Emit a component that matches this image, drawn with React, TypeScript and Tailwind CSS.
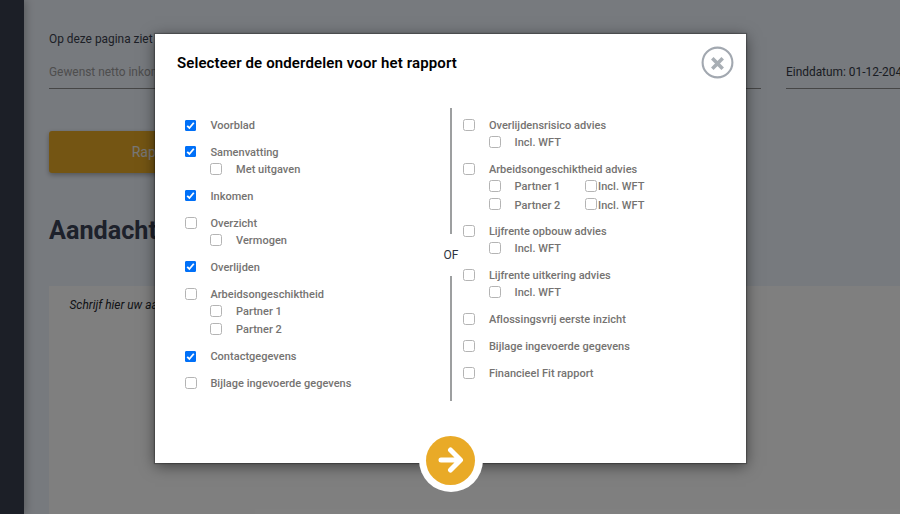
import { useState } from 'react'
import clsx from 'clsx'

type Option = {
  id: string
  label: string
  children?: { id: string; label: string; extra?: { id: string; label: string } }[]
}

const rapportOnderdelen: Option[] = [
  { id: 'voorblad', label: 'Voorblad' },
  { id: 'samenvatting', label: 'Samenvatting', children: [{ id: 'uitgaven', label: 'Met uitgaven' }] },
  { id: 'inkomen', label: 'Inkomen' },
  { id: 'overzicht', label: 'Overzicht', children: [{ id: 'vermogen', label: 'Vermogen' }] },
  { id: 'overlijden', label: 'Overlijden' },
  {
    id: 'ao',
    label: 'Arbeidsongeschiktheid',
    children: [{ id: 'ao-p1', label: 'Partner 1' }, { id: 'ao-p2', label: 'Partner 2' }]
  },
  { id: 'contact', label: 'Contactgegevens' },
  { id: 'bijlage', label: 'Bijlage ingevoerde gegevens' }
]

const adviesOnderdelen: Option[] = [
  { id: 'orv', label: 'Overlijdensrisico advies', children: [{ id: 'orv-wft', label: 'Incl. WFT' }] },
  {
    id: 'aov',
    label: 'Arbeidsongeschiktheid advies',
    children: [
      { id: 'aov-p1', label: 'Partner 1', extra: { id: 'aov-p1-wft', label: 'Incl. WFT' } },
      { id: 'aov-p2', label: 'Partner 2', extra: { id: 'aov-p2-wft', label: 'Incl. WFT' } }
    ]
  },
  { id: 'opbouw', label: 'Lijfrente opbouw advies', children: [{ id: 'opbouw-wft', label: 'Incl. WFT' }] },
  { id: 'uitkering', label: 'Lijfrente uitkering advies', children: [{ id: 'uitkering-wft', label: 'Incl. WFT' }] },
  { id: 'aflossingsvrij', label: 'Aflossingsvrij eerste inzicht' },
  { id: 'advies-bijlage', label: 'Bijlage ingevoerde gegevens' },
  { id: 'fit', label: 'Financieel Fit rapport' }
]

type ListProps = { options: Option[]; checked: string[]; onToggle: (id: string) => void }

function Checkbox({ checked, onClick }: { checked: boolean; onClick: () => void }) {
  return (
    <button
      role="checkbox"
      aria-checked={checked}
      onClick={onClick}
      className={clsx(
        'flex shrink-0 items-center justify-center border',
        checked
          ? 'mr-px h-[11px] w-[11px] rounded-[1px] border-[#0070f8] bg-[#0070f8]'
          : 'h-[12px] w-[12px] rounded-[2.5px] border-[#b4b4b4] bg-white'
      )}
    >
      {checked && (
        <svg viewBox="0 0 11 11" className="h-[11px] w-[11px] shrink-0" fill="none" stroke="#fff" strokeWidth="1.8">
          <path d="M2.2 5.8 4.4 8 8.8 2.7" />
        </svg>
      )}
    </button>
  )
}

function OptionList({ options, checked, onToggle }: ListProps) {
  return (
    <ul className="flex flex-col gap-[9.93px] text-[11px] font-medium tracking-[0.02px] text-[#757371]">
      {options.map(o => (
        <li key={o.id}>
          <div className="flex h-[17px] items-center gap-[13.5px]">
            <Checkbox checked={checked.includes(o.id)} onClick={() => onToggle(o.id)} />
            <span className="pt-[2.2px] leading-[14px] whitespace-nowrap">{o.label}</span>
          </div>
          {o.children && (
            <div className="flex flex-col gap-[1.5px] pl-[25.5px]">
              {o.children.map(c => (
                <div key={c.id} className="flex h-[17px] items-center">
                  <Checkbox checked={checked.includes(c.id)} onClick={() => onToggle(c.id)} />
                  <span className="ml-[13.7px] w-[70px] pt-[2.2px] leading-[14px] whitespace-nowrap">{c.label}</span>
                  {c.extra && (
                    <>
                      <Checkbox checked={checked.includes(c.extra.id)} onClick={() => onToggle(c.extra!.id)} />
                      <span className="ml-[1.5px] pt-[2.2px] leading-[14px] whitespace-nowrap">{c.extra.label}</span>
                    </>
                  )}
                </div>
              ))}
            </div>
          )}
        </li>
      ))}
    </ul>
  )
}

function ReportPage() {
  return (
    <div className="flex h-full bg-[#eff4fc]">
      <aside className="relative w-[23.5px] shrink-0 bg-[#383f4f] shadow-[2px_0_8px_rgba(0,0,0,0.25)]" />
      <main className="min-w-0 flex-1 overflow-hidden pl-[25.5px]">
        <p className="mt-[31px] h-4 text-[11.9px] leading-4 whitespace-nowrap text-[#3a414e]">Op deze pagina ziet u</p>
        <div className="mt-[8px] flex gap-[25px] text-[11.9px] whitespace-nowrap">
          <div className="flex h-[34px] w-[712px] shrink-0 items-center border-b border-[#8c8c8c] pt-[2px] text-[#9c9c9c]">
            Gewenst netto inkomen
          </div>
          <div className="flex h-[34px] w-[240px] shrink-0 items-center border-b border-[#8c8c8c] pt-[2px] text-[#343a46]">
            Einddatum: 01-12-2044
          </div>
        </div>
        <button className="mt-[42px] flex h-[42px] w-[238px] items-center justify-center rounded-[3px] bg-[#e9aa27] text-[14px] text-[#eeeeee] shadow-[0_2px_5px_rgba(0,0,0,0.3)]">
          Rapportage
        </button>
        <h1 className="mt-[42px] h-8 text-[25.2px] leading-8 font-bold text-[#3b4256]">Aandachtspunten</h1>
        <div className="mt-[39px] h-[240px] bg-white px-[20.5px] pt-[10px] text-[11.9px] leading-[18px] text-[#24272e] italic">
          Schrijf hier uw aandachtspunten
        </div>
      </main>
    </div>
  )
}

export default function App() {
  const [checked, setChecked] = useState(['voorblad', 'samenvatting', 'inkomen', 'overlijden', 'contact'])
  const toggle = (id: string) =>
    setChecked(prev => (prev.includes(id) ? prev.filter(x => x !== id) : [...prev, id]))

  return (
    <div className="relative h-[514px] w-[900px] overflow-hidden font-[Roboto,sans-serif]">
      <ReportPage />
      <div className="absolute inset-0 bg-black/50 pt-[34px] pl-[155.4px]">
        <div
          role="dialog"
          className="relative h-[429px] w-[591px] bg-white shadow-[0_0_1px_1px_rgba(0,0,0,0.25),0_3px_14px_rgba(0,0,0,0.5)]"
        >
          <header className="flex justify-between pt-[12px] pr-[12.4px] pl-[21.5px]">
            <h2 className="mt-[6px] text-[15px] leading-[22px] font-semibold tracking-[0.13px] text-black">
              Selecteer de onderdelen voor het rapport
            </h2>
            <button aria-label="Sluiten">
              <svg viewBox="0 0 33 33" className="h-[33px] w-[33px]" fill="none">
                <circle cx="16.5" cy="16.5" r="14.9" stroke="#a2a8b0" strokeWidth="2.1" />
                <path d="m11.3 12.3 10.4 10.4m0-10.4-10.4 10.4" stroke="#a8aeb4" strokeWidth="3.6" />
              </svg>
            </button>
          </header>
          <div className="mt-[29px] flex pl-[29.5px]">
            <div className="w-[255px] pt-[8.5px]">
              <OptionList options={rapportOnderdelen} checked={checked} onToggle={toggle} />
            </div>
            <div className="flex w-[22px] flex-col items-center text-[12px] text-[#2d3342]">
              <span className="h-[126px] w-[1.6px] bg-[#9d9fa0]" />
              <span className="flex h-[42px] items-center">OF</span>
              <span className="h-[125px] w-[1.6px] bg-[#9d9fa0]" />
            </div>
            <div className="pt-[8.5px] pl-[1.5px]">
              <OptionList options={adviesOnderdelen} checked={checked} onToggle={toggle} />
            </div>
          </div>
          <button
            aria-label="Verder"
            className="absolute top-[394px] left-[263.6px] flex h-16 w-16 items-center justify-center rounded-full bg-white"
          >
            <span className="flex h-[49px] w-[49px] items-center justify-center rounded-full bg-[#e9aa27]">
              <svg viewBox="0 0 26 28" className="h-7 w-[26px]" fill="none" stroke="#fff" strokeWidth="5" strokeLinecap="round" strokeLinejoin="round">
                <path d="M3 14h18M12.5 4 22.5 14 12.5 24" />
              </svg>
            </span>
          </button>
        </div>
      </div>
    </div>
  )
}
